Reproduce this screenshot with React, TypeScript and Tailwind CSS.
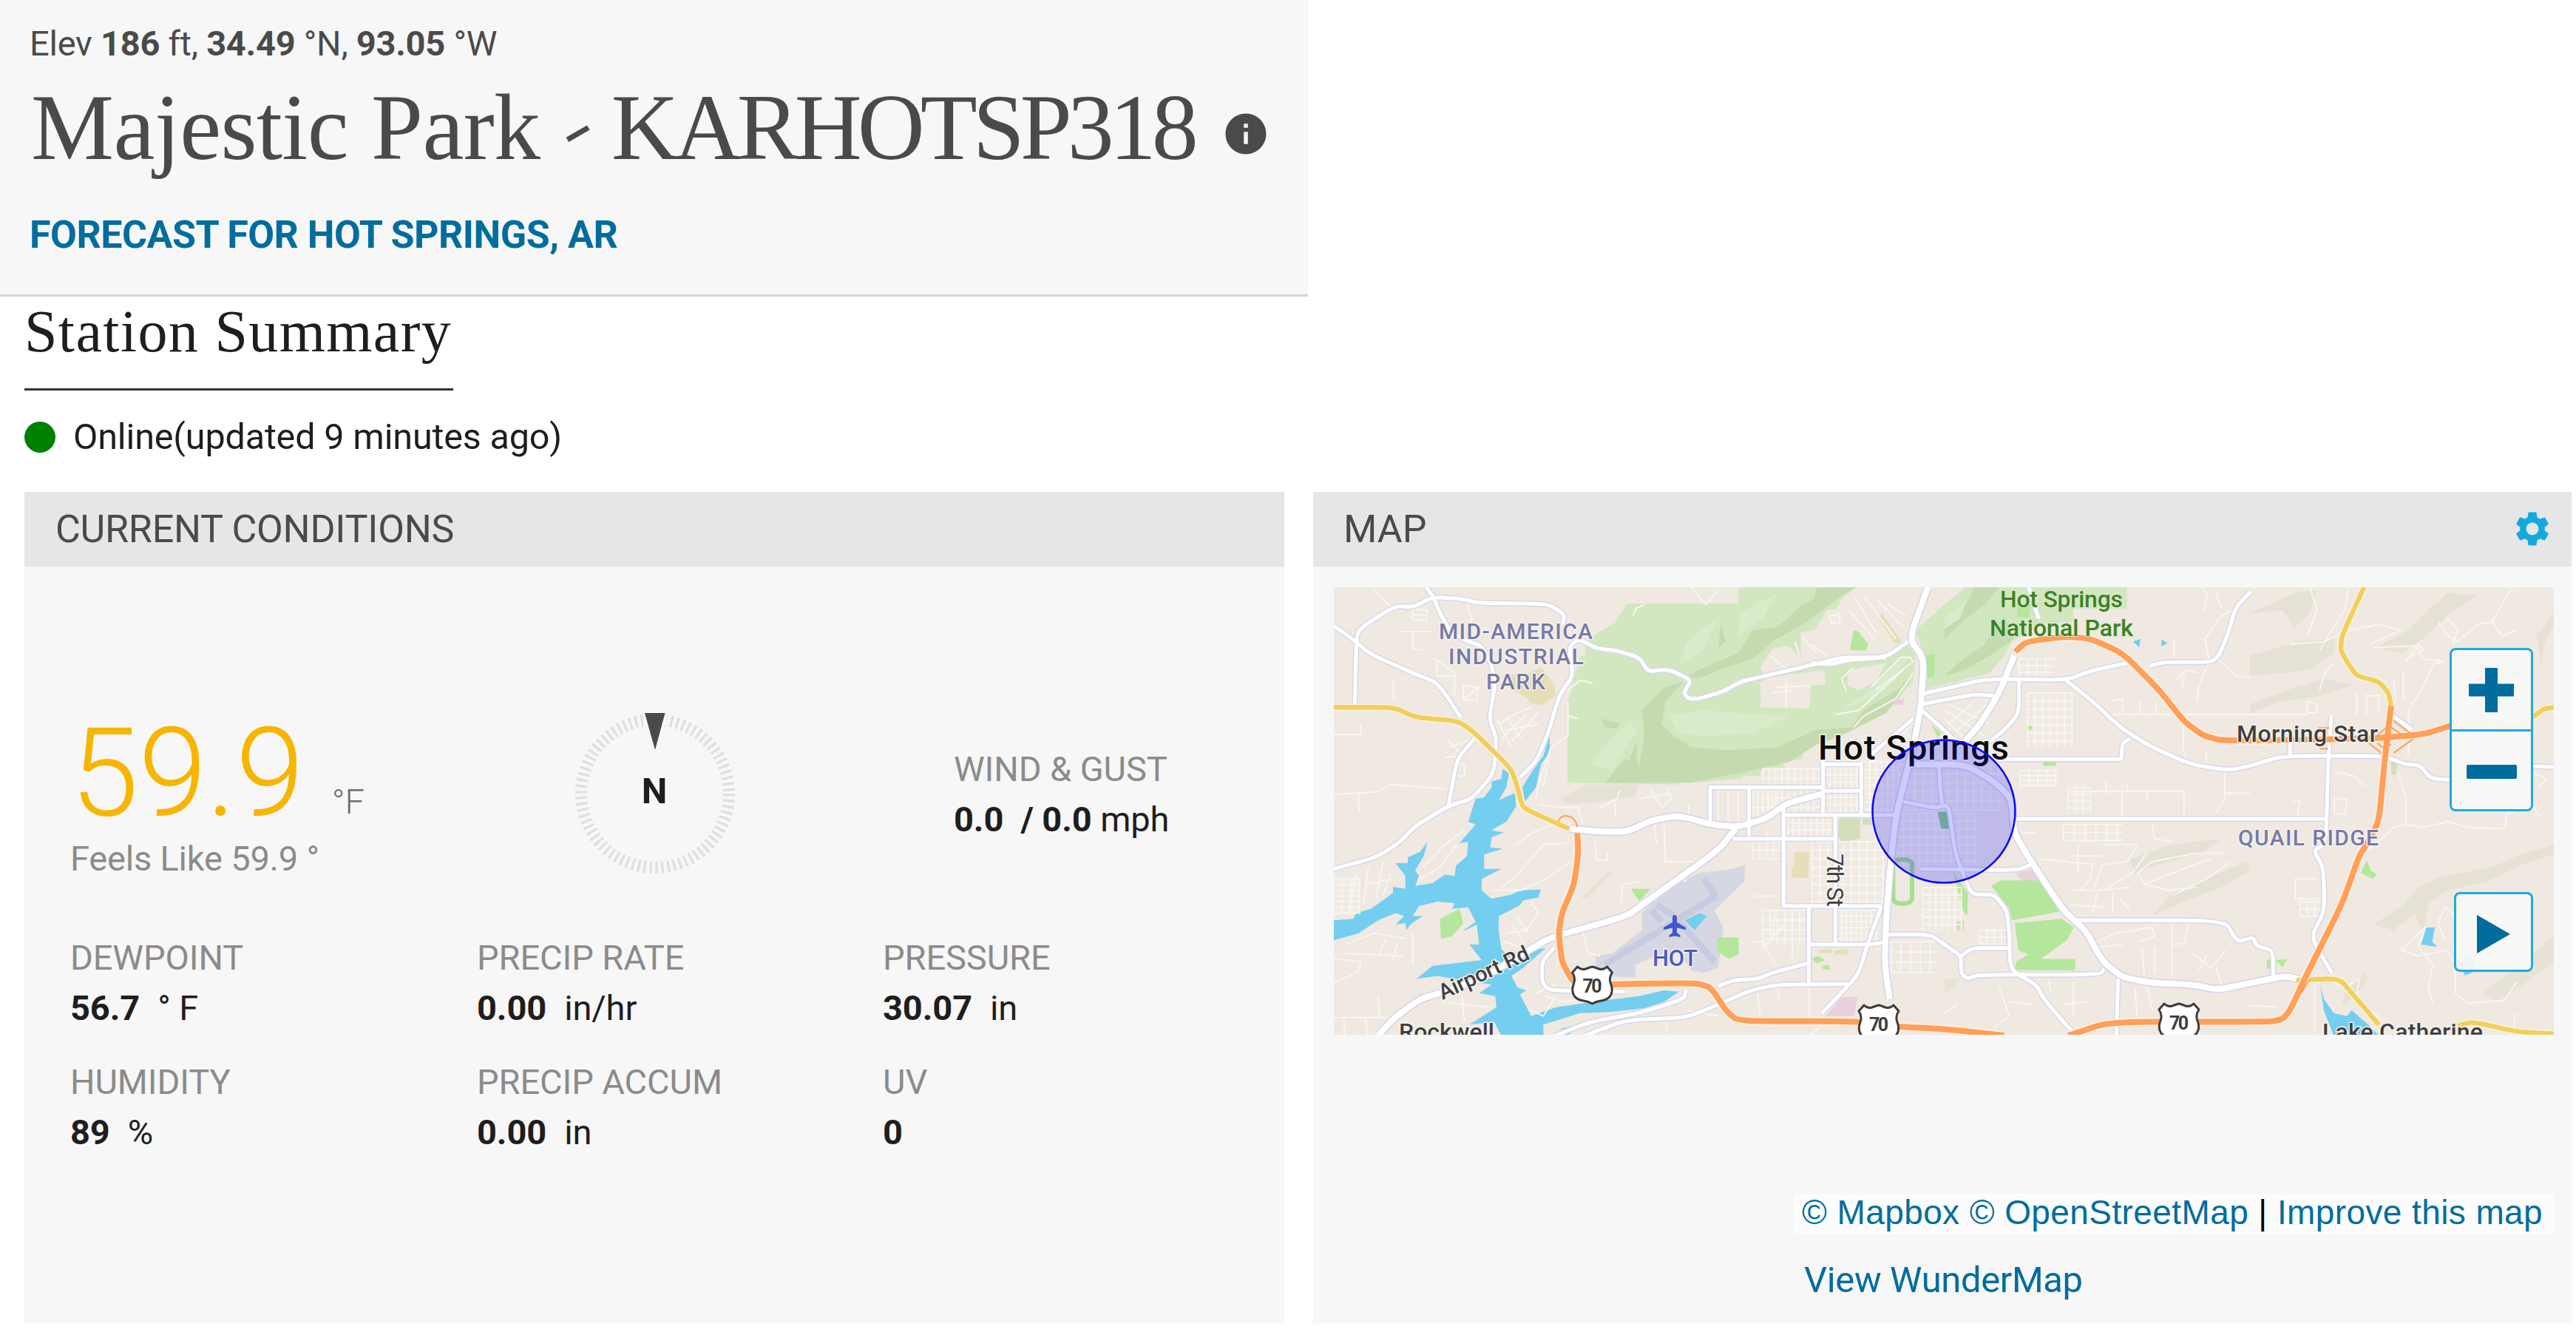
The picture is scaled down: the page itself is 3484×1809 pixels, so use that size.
import { MdInfo, MdSettings } from 'react-icons/md'

interface Metric {
  label: string
  value: string
  unit?: string
}

const METRICS: Metric[] = [
  { label: 'DEWPOINT', value: '56.7', unit: '° F' },
  { label: 'PRECIP RATE', value: '0.00', unit: 'in/hr' },
  { label: 'PRESSURE', value: '30.07', unit: 'in' },
  { label: 'HUMIDITY', value: '89', unit: '%' },
  { label: 'PRECIP ACCUM', value: '0.00', unit: 'in' },
  { label: 'UV', value: '0' },
]

// Map geometry lives in a 4950 x 1566 survey grid; MapCanvas scales it to the
// 1650 x 605 viewport and keeps the stroke widths in screen pixels.

const FOREST = [
  '948,684 948,400 965,350 1000,240 1020,240 1020,200 1060,165 1140,125 1190,57 1642,57 1642,0 2120,0 2060,40 2040,75 2000,80 1950,150 1895,157 1895,245 1840,205 1780,215 1730,280 1740,300 1880,285 1960,262 2060,245 2240,245 2320,190 2360,240 2350,330 2300,380 2240,440 2150,480 2080,510 1990,545 1960,550 1905,570 1900,602 1820,608 1830,630 1735,640 1730,660 1655,660 1650,670 1440,684 1430,655 1400,655 1400,690',
  '2360,150 2478,60 2560,0 3218,0 3218,75 3000,75 3000,120 2870,130 2750,190 2720,240 2660,300 2478,340 2380,360 2400,250',
]

const CLEARINGS = [
  '1730,335 1760,315 1990,290 1995,340 1935,345 1930,425 1732,420',
  '2085,290 2240,265 2200,330 2130,360 2085,345',
]

const RIDGES = [
  '2120,0 2060,30 2000,70 1900,130 1780,190 1700,250 1560,290 1480,320 1440,310 1480,290 1640,230 1700,150 1800,140 1900,60 1950,40 1960,0',
  '1239,620 1260,520 1250,430 1340,350 1420,330 1345,400 1330,480 1380,520 1450,560 1600,570 1800,560 1950,500 2100,490 2150,430 2300,350 2340,300 2300,380 2240,440 2080,510 1960,550 1850,610 1650,650 1440,684 1100,684 1180,600',
  '1570,130 1590,190 1560,210',
  '1080,460 1160,475 1150,495 1100,490',
  '1230,540 1200,600 1230,630',
  '2700,0 2640,60 2540,130 2478,180 2478,140 2560,70 2600,0',
  '2720,100 2760,180 2660,240 2560,290 2478,310 2540,260 2640,200',
]

const FOREST_LIGHTS = [
  '1480,150 1560,110 1500,220 1400,270 1430,200',
  '1360,450 1500,430 1700,445 1850,450 1700,510 1500,520 1400,510',
  '1650,90 1800,20 1740,110 1640,170',
  '1090,560 1200,470 1230,500 1130,640 1050,620',
  '2290,260 2340,240 2200,380 2060,430 2180,360',
  '2478,110 2570,40 2540,110 2478,145',
]

const HILLS = [
  '3717,90 3800,60 3900,20 3990,10 3960,90 3900,140 3850,80',
  '3717,240 3830,210 3920,190 4060,180 4060,230 3960,290 3850,300 3717,310',
  '3717,410 3900,350 4020,320 4140,340 4000,380 3840,400 3717,440',
  '4230,210 4360,150 4440,80 4520,20 4640,30 4530,90 4420,180 4330,230',
  '3320,1150 3400,1070 3520,1030 3700,960 3720,990 3600,1050 3420,1110',
  '3230,950 3400,900 3600,880 3520,930 3380,960 3250,1000',
  '4220,1180 4340,1110 4400,1050 4500,1010 4700,980 4800,940 4950,900 4950,935 4820,970 4680,1030 4520,1060 4420,1120 4300,1200',
  '4400,1060 4440,1120 4420,1210 4390,1150',
  '4100,1420 4180,1350 4200,1370 4130,1440 4090,1460',
  '4660,1420 4800,1330 4950,1220 4950,1310 4860,1370 4720,1450',
  '4880,170 4950,90 4950,130 4910,200 4900,270',
  '2478,1370 2540,1370 2490,1420 2478,1410',
  '920,740 1020,690 1240,690 1220,730 1080,750 960,760',
  '1000,1090 1120,990 1130,1000 1040,1080',
]

const WATER = [
  '0,1165 80,1160 90,1140 150,1125 240,1070 240,1048 290,1055 290,1010 250,965 300,965 300,945 350,925 380,890 365,940 330,990 345,1010 330,1045 400,1035 450,1005 490,1010 495,975 540,940 545,890 510,895 575,830 545,820 575,740 610,735 640,700 640,680 680,670 685,635 710,650 700,700 670,745 735,720 740,765 700,820 640,850 690,858 640,875 635,910 685,915 610,935 610,985 680,985 600,1020 600,1060 640,1090 720,1075 760,1060 840,1057 830,1085 770,1095 750,1115 670,1150 668,1200 680,1265 700,1285 860,1262 770,1330 720,1360 745,1400 780,1410 755,1425 780,1465 800,1500 900,1470 1050,1450 1239,1430 1340,1410 1400,1415 1340,1450 1260,1472 1130,1485 1000,1490 850,1530 850,1568 680,1568 650,1520 550,1530 660,1470 655,1430 590,1420 640,1390 520,1375 420,1360 335,1370 400,1325 540,1310 600,1305 550,1250 590,1250 580,1180 520,1205 575,1170 545,1120 480,1125 490,1105 420,1100 345,1115 320,1150 360,1150 310,1180 295,1200 290,1175 250,1180 285,1150 250,1140 180,1165 100,1210 0,1235',
  '875,520 878,575 840,620 820,700 775,750 765,700 800,650 850,590',
  '1424,1165 1484,1140 1514,1150 1464,1200',
  '4412,1250 4432,1190 4467,1190 4457,1240 4477,1258',
  '4565,1320 4580,1295 4610,1290 4632,1310 4615,1350 4590,1358',
  '4002,1390 4017,1440 4057,1490 4110,1500 4130,1480 4197,1530 4240,1568 4057,1568 4017,1480',
  '3243,190 3273,180 3268,210',
  '3358,183 3383,195 3358,207',
  '4785,300 4805,290 4815,305 4795,312',
  '920,1545 990,1530 950,1568',
]

const PARKS = [
  '435,1230 430,1160 510,1125 525,1175 480,1220',
  '2668,1045 2708,1025 2863,1025 2943,1135 2753,1165 2738,1120',
  '2763,1175 2953,1160 3003,1190 2973,1235 2918,1270 2868,1300 3008,1300 3008,1340 2763,1340 2768,1310 2818,1285 2778,1270',
  '1554,1225 1642,1225 1642,1285 1604,1300 1559,1275',
  '1205,1055 1285,1055 1239,1098',
  '1939,1300 1964,1290 1994,1305 1959,1315',
  '1979,1325 2009,1320 2012,1337 1985,1337',
  '2094,220 2109,150 2129,155 2169,200 2155,222',
  '2813,480 2833,480 2833,498 2813,498',
  '2878,612 2935,612 2925,625 2880,625',
  '2515,1000 2573,1070 2570,1150 2553,1130',
  '4167,1000 4192,955 4207,990 4232,1005 4217,1020',
  '3822,1305 3868,1300 3850,1330',
  '3785,1305 3800,1300 3800,1335 3787,1335',
  '2400,240 2440,230 2435,315 2410,318',
  '2425,480 2465,510 2450,525',
  '2772,60 2830,60 2820,105 2772,105',
]

const MUTED_PARKS = [
  '2050,808 2136,808 2136,878 2060,893 2045,870',
  '2145,808 2185,808 2180,832 2145,832',
  '4290,610 4318,605 4310,655 4290,655',
  '2526,1170 2556,1165 2556,1200 2526,1200',
]

const YARDS = [
  '770,380 800,405 840,412 900,380 895,340 840,280 790,300 680,310 730,360',
  '1869,927 1929,927 1924,1018 1857,1015 1857,980 1869,978',
  '2212,110 2224,90 2304,190 2279,198',
  '1970,1268 2020,1265 2020,1280 1970,1280',
  '2030,1272 2085,1265 2085,1285 2030,1285',
]

const PINK_LOTS = [
  '1995,1500 2060,1435 2125,1433 2110,1500',
  '2768,1000 2850,985 2860,1025 2790,1025',
  '2270,400 2315,388 2310,410 2275,412',
]

const AIRFIELD =
  '1062,1360 1062,1290 1130,1280 1250,1200 1250,1140 1300,1080 1480,1000 1620,985 1670,970 1664,1030 1600,1085 1545,1130 1580,1190 1560,1330 1500,1350 1450,1340 1400,1280 1300,1290 1225,1320 1225,1365'

// x, y, width, height, column step, row step
const STREET_GRIDS: number[][] = [
  [1740, 635, 240, 160, 26, 34],
  [1990, 630, 150, 165, 22, 26],
  [2150, 610, 130, 185, 24, 28],
  [1700, 710, 120, 90, 20, 60],
  [1840, 800, 190, 75, 24, 25],
  [1700, 890, 110, 60, 28, 30],
  [1940, 890, 290, 220, 32, 30],
  [2040, 1130, 170, 120, 20, 20],
  [1740, 1130, 180, 120, 30, 34],
  [2290, 620, 430, 160, 34, 32],
  [2280, 790, 330, 190, 32, 28],
  [2390, 1050, 160, 150, 26, 26],
  [2815, 370, 180, 190, 30, 28],
  [2785, 640, 150, 60, 36, 18],
  [2980, 700, 90, 90, 30, 24],
  [2960, 830, 240, 60, 44, 28],
  [2780, 250, 140, 60, 36, 24],
  [0, 1020, 110, 120, 34, 20],
  [2620, 1200, 110, 55, 30, 24],
  [2260, 1240, 190, 110, 40, 36],
  [3920, 1100, 90, 55, 30, 26],
]

const LANES = [
  'M320,75L380,80L375,118L320,112ZM320,95L375,98M160,10L235,70M540,60L560,110L545,160',
  'M270,155L400,155M320,155L320,215L360,220M410,250L490,300L490,380M415,250L420,310L500,310M525,345L585,350L580,395L525,395ZM525,395L585,350',
  'M240,330L243,400M0,515L110,515L108,480M0,725L180,715L230,690L455,705M100,720L102,785',
  'M670,480L740,440L800,420M690,500L830,480M680,530L780,445M720,540L830,440M700,450L760,530M660,460L720,560',
  'M460,530L520,590L450,595M470,560L560,530L640,560M510,620L530,620L530,660L490,660',
  'M950,400L950,520L880,560L850,700M880,560L830,690L820,740M950,360L1000,325L1050,335M950,450L995,460',
  'M830,760L920,770L1000,770M990,770L1010,830M1080,770L1150,740L1160,710M1140,750L1145,810M890,830L800,860L740,900',
  'M640,1060L760,1060L860,1020L960,960M680,1050L740,1010L850,900L950,895M1060,890L1065,955L1110,955L1110,930',
  'M90,1000L60,1140M140,980L120,1110M200,960L170,1090M230,1000L200,1080M130,1040L240,1020M360,980L450,900L530,850M350,1020L430,980L500,900',
  'M50,1250L160,1210L290,1230M40,1280L280,1290M0,1300L110,1310L100,1345L0,1385M210,1230L180,1290M320,1210L320,1320M260,1240L240,1300',
  'M0,1505L240,1505M130,1510L135,1568M180,1430L185,1505M40,1510L45,1568M440,1450L640,1470M520,1430L530,1520',
  'M700,1210L780,1200L830,1140L800,1100M720,1180L770,1240M740,1150L790,1210M690,1240L760,1260',
  'M1010,1200L1030,1280L1080,1290M1165,1110L1170,1040L1239,1030',
  'M800,1480L850,1500L900,1430M860,1430L930,1450L1040,1440M820,1420L900,1390',
  'M1450,0L1510,60L1560,10M1215,100L1225,75L1260,60M2110,30L2200,160M2090,80L2200,190M2150,30L2280,180M2200,40L2310,140M2250,60L2320,100M2010,100L2050,95L2055,125L2020,125Z',
  'M1870,190L1890,240M1770,240L1830,280M1900,175L1960,230M1940,200L2000,240M1790,350L1930,345M1835,330L1835,425M1780,370L1860,360',
  'M2035,445L2130,430L2220,360L2310,290M2110,490L2150,450L2280,390L2350,300M2080,365L2060,320L2110,280M2200,360L2350,260L2340,245L2300,245L2180,350',
  'M1239,740L1300,730L1370,720M1280,700L1330,770M1350,700L1370,740L1330,770M1300,820L1310,900M1340,830L1345,960M1440,760L1440,830',
  'M1560,700L1560,830M1600,700L1600,830M1640,700L1640,830M1760,850L1760,900M1340,960L1500,960M1390,1010L1430,1030',
  'M1710,1080L1790,1080M1740,1140L1740,1240L1790,1320M1790,1130L1780,1230M1830,1180L1740,1260M1860,1130L1860,1300M1690,1240L1740,1240',
  'M1430,1480L1560,1500M1720,1420L1730,1500M1800,1400L1810,1450M1930,1400L1930,1500M1350,1520L1350,1568M2000,1520L1930,1568',
  'M2280,540L2400,430M2300,500L2370,540M2260,500L2330,560M2478,430L2640,520M2500,410L2660,480M2490,480L2600,400M2530,500L2650,410M2478,460L2560,530',
  'M3150,400L3200,390L3200,440M3160,445L3950,445M3270,400L3272,445M3335,400L3335,445M3410,180L3410,245M3530,80L3545,20L3520,0M3580,20L3600,70M3550,250L3535,180L3600,100L3680,70',
  'M3420,320L3460,290L3510,300M3550,260L3510,350L3500,400M3440,360L3450,310M3450,450L3445,560L3460,600M3585,250L3660,310L3720,315',
  'M2990,715L3450,715L3450,800M3198,720L3198,800M3300,720L3300,750M3130,680L3135,720M3220,690L3220,715M3540,570L3540,620M3615,640L3615,740L3580,790M3620,720L3717,720',
  'M2790,860L2850,860M2860,950L3080,970L3070,1020L3030,1060M3020,900L3020,1000M2980,940L3120,940M3120,900L3260,900L3220,960L3120,970M3320,830L3330,880L3400,890',
  'M2990,1060L3080,1060L3120,970M2990,1110L3120,1120M3080,1140L3100,1060L3230,1050M3160,1070L3160,1140M3190,1090L3230,1130M3140,1050L3240,1000L3300,930',
  'M3260,1000L3320,960L3500,930L3620,930M3290,1040L3400,1000L3560,950M3260,1000L3290,1040L3390,1060L3500,1050M3400,1080L3540,1020L3640,960',
  'M3100,1240L3170,1210L3320,1190L3330,1220L3270,1240M3100,1260L3200,1250M3280,1260L3290,1390M3330,1260L3330,1350M3400,1180L3400,1360M3400,1250L3450,1245L3470,1170M3480,1280L3560,1330L3620,1270M3540,1290L3510,1340M3580,1330L3600,1390',
  'M2900,1370L2910,1420M2960,1460L3060,1450M3000,1380L3000,1500M3250,1400L3260,1500M3300,1400L3320,1480M2700,1400L2740,1500L2680,1540M2740,1450L2840,1460M2478,1490L2530,1460',
  'M4000,220L4050,150L4100,80L4120,0M3960,0L3990,80L3950,170M3880,200L4020,190L4120,150L4240,130L4330,150L4200,200M4050,270L4020,300L4000,360',
  'M4350,250L4420,220L4400,200L4350,260M4220,210L4390,205L4420,250L4500,260L4460,270L4420,350L4360,430L4360,590M4480,120L4520,170L4560,190L4640,130L4700,120L4780,0M4500,130L4520,110L4560,150L4540,200M4700,120L4740,170L4800,150',
  'M4150,370L4150,450M4180,380L4240,380L4240,440M4190,380L4190,450M3950,400L3990,410L3990,440L3950,440ZM4300,330L4310,400M4340,300L4340,400',
  'M4060,645L4140,660L4180,695M4060,740L4110,740L4105,795L4060,790ZM3890,750L3920,745L3910,800M4320,650L4350,740L4350,830L4300,840L4200,920M4350,830L4420,840L4520,820L4600,840L4750,845L4760,790L4870,770L4890,800',
  'M3900,1020L3990,1020M3900,1020L3900,1090L4000,1090M4330,1270L4430,1190L4400,1260L4460,1320L4440,1400L4460,1460M4480,1170L4510,1120L4550,1150M4480,1170L4510,1240M4330,1270L4400,1290L4520,1270L4550,1320L4550,1420L4600,1455L4750,1445L4800,1380',
  'M3980,1390L3980,1568M4020,1370L4100,1400L4160,1370L4150,1440L4250,1510M3717,1465L3830,1468M4790,1490L4790,1540M4870,650L4920,670L4890,700',
]

const MINOR_ROADS = [
  '-10,130 75,180 150,235 270,280 320,300 410,330 450,370 515,455',
  '375,0 405,35 430,90 470,150 530,185 600,205 640,270 655,340 630,460 660,530 650,650 560,740 465,765 330,835 270,890 200,930 150,950 0,985',
  '85,410 92,160 130,130 250,65 320,70 400,35 520,40 580,55 870,58 935,95 930,130',
  '465,765 500,600 570,530',
  '755,665 820,610 870,510 900,420 920,370 970,310 955,210 990,180 1070,215 1140,220 1239,245 1275,295 1360,287 1450,325 1420,370 1440,390 1480,390 1580,365 1650,330 1750,310 1950,270 2060,245 2240,245 2330,190',
  '895,1260 845,1310 845,1380 870,1408 960,1412 1180,1415',
  '1940,265 2020,270 2080,255 2240,245',
  '2220,1120 2165,1250 2130,1350 2080,1400 1980,1490',
  '1560,1395 1620,1375 1720,1370 1790,1345 1927,1315',
  '1020,1568 1180,1515 1430,1505 1560,1460 1690,1410 1800,1390 2085,1388',
  '900,1568 1040,1520 1239,1490 1420,1440 1430,1410',
  '2250,1215 2420,1215 2478,1250 2545,1290 2545,1350 2570,1370 2620,1355 3110,1355 3125,1335',
  '2545,1290 2590,1262 2735,1262',
  '2380,985 2770,990 2830,970',
  '2310,750 2440,772 2495,760 2520,930 2580,1060 2600,1075 2680,1075 2730,1130 2740,1200 2745,1340 2850,1390 2880,1440 2980,1540 3020,1568',
  '2380,375 2478,355 2650,320 2970,325 3080,290 3220,265',
  '2970,325 3080,400 3190,490 3320,560 3480,620 3630,640 3717,625 3850,590 4240,590 4290,600 4350,620 4405,622 4450,668 4530,675 4700,640 4870,625 4956,630',
  '3310,275 3370,262 3560,262 3590,240 3625,170 3660,70 3720,15',
  '2380,410 2500,390 2600,375 2680,380',
  '2385,430 2478,500 2510,530',
  '2780,320 2780,440 2720,500 2660,540',
  '3195,602 3200,545 3230,530',
  '2820,0 2860,110',
  '3015,1165 3615,1165 3665,1240 3730,1225 3745,1255 3810,1270 3812,1360',
  '4047,450 4035,600 4025,900 3975,920 4015,980 4020,1130 3965,1225 4050,1350',
  '2160,600 2350,460',
]

const GRID_ROADS =
  'M1527,830V700H1985M1685,700V870M1985,610V790M2140,610V800M1985,712H2140M1985,620H2140M1825,770V1115H2220M2035,800V1250M1927,1120V1385M1825,797H2280M1620,880H2035M1927,1250H2170L2230,1243M2700,601H3195M2770,810H4025M3182,1370L3175,1568M3880,530V590M2455,620L2460,700 2470,770'

const MAIN_ROADS = [
  '960,845 1080,855 1190,855 1290,815 1390,800 1450,810 1530,830 1640,838 1750,810 1840,755 1985,722',
  '180,1568 240,1510 350,1440 450,1415 600,1370 780,1275 880,1225 1190,1150 1260,1105 1560,920 1630,845',
  '2410,0 2335,180 2395,250 2380,430 2350,560 2280,800 2255,1000 2240,1180 2235,1320 2255,1440',
  '2760,240 2700,370 2620,480 2560,540',
  '2340,620 2560,620 2680,680 2750,740 2760,860 2830,960 2960,1130 3050,1200 3120,1310 3200,1365 3330,1385 3480,1390 3590,1408 3717,1385 3860,1360 3920,1372',
  '4290,450 4370,500',
]

const YELLOW_ROADS = [
  '0,420 245,420 330,455 500,468 560,500 720,635 745,700 765,770 850,805 955,845',
  '4180,0 4090,170 4085,220 4110,260 4150,310 4240,330 4280,370 4290,415',
  '4530,485 4600,475 4700,480 4800,490 4870,450 4910,425 4950,420',
  '3905,1375 4080,1368 4140,1430 4240,1530',
  '4560,1535 4620,1520 4800,1555 4950,1562',
]

const HIGHWAYS = [
  '988,860 992,930 975,1040 925,1140 912,1210 925,1310 970,1380 1030,1392 1239,1387 1470,1385 1530,1400 1590,1480 1640,1518 2120,1518 2240,1535 2478,1545 2720,1568',
  '2980,1568 3150,1520 3800,1520 3850,1510 3880,1480 3950,1350 4090,1110 4160,940 4190,900 4240,820 4260,640 4275,520 4290,415',
  '2765,225 2810,190 2970,172 3070,180 3200,230 3350,360 3450,470 3530,520 3610,537 4200,530 4420,515 4530,485',
]

/** Rounds a list of survey points into a path with a soft bend at each one. */
function smooth(points: string) {
  const pts = points.split(' ').map((p) => p.split(',').map(Number))
  let d = `M${pts[0][0]},${pts[0][1]}`
  for (let i = 1; i < pts.length - 1; i++) {
    const [px, py] = pts[i - 1]
    const [x, y] = pts[i]
    const [nx, ny] = pts[i + 1]
    d += `L${x + (px - x) * 0.3},${y + (py - y) * 0.3}Q${x},${y} ${x + (nx - x) * 0.3},${y + (ny - y) * 0.3}`
  }
  const last = pts[pts.length - 1]
  return `${d}L${last[0]},${last[1]}`
}

function gridPath([x, y, w, h, dx, dy]: number[]) {
  let d = ''
  for (let gx = x; gx <= x + w; gx += dx) d += `M${gx},${y}V${y + h}`
  for (let gy = y; gy <= y + h; gy += dy) d += `M${x},${gy}H${x + w}`
  return d
}

function Areas({ shapes, fill, opacity = 1 }: { shapes: string[]; fill: string; opacity?: number }) {
  return (
    <g fill={fill} opacity={opacity}>
      {shapes.map((points) => (
        <polygon key={points} points={points} />
      ))}
    </g>
  )
}

function Roads({ paths, stroke, width }: { paths: string[]; stroke: string; width: number }) {
  return (
    <g fill="none" stroke={stroke} strokeWidth={width} strokeLinejoin="round">
      {paths.map((d) => (
        <path key={d} d={d} vectorEffect="non-scaling-stroke" />
      ))}
    </g>
  )
}

function Shield({ x, y }: { x: number; y: number }) {
  return (
    <g transform={`translate(${x} ${y})`}>
      <path
        d="M-20,-25Q-15,-20 -9,-22Q-4,-24 0,-25Q4,-24 9,-22Q15,-20 20,-25L27,-17Q22,-10 25,-2Q29,8 24,15Q20,20 12,21Q5,22 0,25Q-5,22 -12,21Q-20,20 -24,15Q-29,8 -25,-2Q-22,-10 -27,-17Z"
        fill="#fff"
        stroke="#3c3c3c"
        strokeWidth="3"
        strokeLinejoin="round"
      />
      <text x="-13" y="10" textLength="26" fontSize="25" fontWeight="700" fill="#3c3c3c">
        70
      </text>
    </g>
  )
}

function MapCanvas() {
  const minor = MINOR_ROADS.map(smooth).concat(GRID_ROADS)
  const main = MAIN_ROADS.map(smooth)
  const yellow = YELLOW_ROADS.map(smooth)
  const highways = HIGHWAYS.map(smooth)

  return (
    <svg viewBox="0 0 1650 605" className="block h-[605px] w-[1650px] bg-[#efe9e1] font-['Roboto',sans-serif]">
      <g transform="scale(0.33333 0.38647)">
        <Areas shapes={HILLS} fill="#e4dfd2" opacity={0.75} />
        <Areas shapes={FOREST} fill="#d2e7c0" />
        <Areas shapes={RIDGES} fill="#c6daaf" />
        <Areas shapes={FOREST_LIGHTS} fill="#daebcb" />
        <Areas shapes={CLEARINGS} fill="#efe9e1" />
        <Areas shapes={[AIRFIELD]} fill="#d5d8e2" />
        <Areas shapes={MUTED_PARKS} fill="#d3dfba" />
        <Areas shapes={YARDS} fill="#e5deb6" />
        <Areas shapes={PINK_LOTS} fill="#e8d1da" />
        <Areas shapes={PARKS} fill="#b4e69c" />
        <Areas shapes={WATER} fill="#74cef0" />
        <Roads
          paths={['M1100,1320L1550,1080', 'M1400,1170L1545,1310', 'M1290,1130L1330,1170M1500,1020L1550,1080M1310,1110L1380,1150']}
          stroke="#c8cae0"
          width={9}
        />
        <Roads paths={STREET_GRIDS.map(gridPath)} stroke="#f9f6f2" width={1.8} />
        <Roads paths={LANES} stroke="#f9f6f2" width={2} />
        <Areas shapes={['2450,785 2495,785 2500,845 2465,845']} fill="#8fd08a" />
        <Roads paths={['M2269,970Q2269,952 2307,952Q2346,952 2346,970V1085Q2346,1107 2307,1107Q2269,1107 2269,1085Z']} stroke="#a6df8e" width={6} />
        <Roads paths={minor} stroke="#d6d8ea" width={8} />
        <Roads paths={main} stroke="#d6d8ea" width={11.5} />
        <Roads paths={minor} stroke="#ffffff" width={5} />
        <Roads paths={main} stroke="#ffffff" width={8} />
        <Roads paths={yellow} stroke="#fbf6e6" width={9} />
        <Roads paths={yellow} stroke="#f2cf5b" width={6.5} />
        <Roads paths={highways} stroke="#fdf3ea" width={11} />
        <Roads
          paths={[
            'M910,820Q920,798 945,800Q980,803 988,840',
            'M4200,545L4250,580M4300,465L4375,515M4300,580L4380,530M4220,530L4270,490M4290,490L4340,520M4235,545L4255,560L4290,550',
            'M3995,492L4040,492M4000,565L4035,565M3925,1420L3960,1370',
          ]}
          stroke="#ff9f58"
          width={2}
        />
        <Roads paths={highways} stroke="#ff9f58" width={8} />
      </g>

      <g fontSize="30" fontWeight="500" fill="#757aa6" stroke="#f6f3f0" strokeWidth="3" paintOrder="stroke" strokeLinejoin="round">
        <text x="142" y="69.5" textLength="208">MID-AMERICA</text>
        <text x="155" y="104" textLength="183">INDUSTRIAL</text>
        <text x="206" y="138" textLength="80">PARK</text>
        <text x="1223" y="349" textLength="190">QUAIL RIDGE</text>
        <text x="431" y="512" textLength="61" fontSize="31" fill="#4a5ac0">HOT</text>
      </g>
      <g fontSize="32" fontWeight="400" fill="#3f3f3f" stroke="#f6f3f0" strokeWidth="3" paintOrder="stroke" strokeLinejoin="round">
        <text transform="translate(147 558) rotate(-25)" textLength="132" fontWeight="500" fontSize="29">Airport Rd</text>
        <text x="88" y="612" textLength="129" fontWeight="500">Rockwell</text>
        <text transform="translate(667 360) rotate(90)" textLength="72" fontSize="31">7th St</text>
        <text x="1221" y="209" textLength="191" fontWeight="500">Morning Star</text>
        <text x="1337" y="612" textLength="217" fontWeight="500">Lake Catherine</text>
      </g>
      <g fontSize="32" fontWeight="500" fill="#3c8226" stroke="#dcebd0" strokeWidth="2" paintOrder="stroke">
        <text x="901" y="27" textLength="166">Hot Springs</text>
        <text x="887" y="66" textLength="194">National Park</text>
      </g>
      <text x="655" y="233" textLength="258" fontSize="47" fontWeight="500" fill="#0c0c0c" stroke="#f6f3f0" strokeWidth="3" paintOrder="stroke">
        Hot Springs
      </text>
      <path
        d="M461 443Q464 443 464 448V453L476 460V463L464 460.5V467L468.500 470.500V473L461 471.500L453.500 473V470.500L458 467V460.500L446 463V460L458 453V448Q458 443 461 443Z"
        fill="#4257c8"
      />
      <Shield x={349.5} y={538} />
      <Shield x={737} y={590} />
      <Shield x={1143} y={588} />
      <circle cx="825" cy="303" r="96.5" fill="#0000ff" fillOpacity="0.2" stroke="#0a0af0" strokeWidth="2.5" />
    </svg>
  )
}

function MapControls() {
  return (
    <>
      <div className="absolute top-[82px] left-[1509px] h-[221px] w-[113px] divide-y-3 divide-[#1fabdd] rounded-lg border-3 border-[#1fabdd] bg-[#f8f8f7]/93">
        <button className="flex h-[110px] w-full items-center justify-center" aria-label="Zoom in">
          <svg viewBox="0 0 61 60" className="h-[60px] w-[61px]">
            <path d="M22 0H39V21.5H61V38.5H39V60H22V38.5H0V21.5H22Z" fill="#006d9e" />
          </svg>
        </button>
        <button className="flex h-[105px] w-full items-center justify-center pt-[3px]" aria-label="Zoom out">
          <span className="h-[19px] w-[68px] rounded-[2px] bg-[#006d9e]" />
        </button>
      </div>
      <button
        className="absolute top-[412px] left-[1515px] flex h-[108px] w-[107px] items-center justify-center rounded-lg border-3 border-[#1fabdd] bg-[#f8f8f7]/93 pt-[5px]"
        aria-label="Play"
      >
        <svg viewBox="0 0 45 52" className="h-[52px] w-[45px]">
          <path d="M0 0L45 26L0 52Z" fill="#006d9e" />
        </svg>
      </button>
    </>
  )
}

function Compass() {
  return (
    <svg viewBox="0 0 216 218" className="h-[218px] w-[216px]">
      <circle cx="108" cy="109" r="100" fill="none" stroke="#dfdfdf" strokeWidth="16" strokeDasharray="3.4 4.655" />
      <path d="M92 0H124V17H92Z" fill="#f7f7f7" />
      <path d="M94 0H121.5L108 50Z" fill="#4a4a4a" />
      <text x="107" y="122" textAnchor="middle" fontSize="49" fontWeight="700" fill="#1e1e1e">
        N
      </text>
    </svg>
  )
}

function StationHeader() {
  return (
    <header className="h-[401px] w-[1769px] border-b-3 border-[#d6d6d6] bg-[#f7f7f7] pt-[31px] pl-10 text-[#4a4a4a]">
      <p className="text-[47px] leading-[56px] tracking-[-0.25px]">
        Elev <b>186</b> ft, <b>34.49</b> °N, <b>93.05</b> °W
      </p>
      <div className="mt-[15px] flex items-center">
        <h1 className="w-[1612px] pt-[2px] pl-[2px] font-['Liberation_Serif',serif] text-[126px] leading-[138px] tracking-[-0.6px] whitespace-nowrap">
          Majestic Park <span className="-mr-[2px] -ml-[5px] inline-block -rotate-30 scale-y-75">-</span>{' '}
          <span className="tracking-[-6px]">KARHOTSP318</span>
        </h1>
        <MdInfo className="mt-[18px] size-[66px] shrink-0" />
      </div>
      <a className="mt-[46px] block text-[52px] leading-[60px] font-bold tracking-[-0.5px] text-[#006d9e]">
        FORECAST FOR HOT SPRINGS, AR
      </a>
    </header>
  )
}

function CurrentConditions() {
  return (
    <section className="h-[1124px] w-[1704px] bg-[#f7f7f7]">
      <h3 className="flex h-[101px] items-center bg-[#e6e6e6] pl-[42px] text-[52px] tracking-[-0.25px] text-[#4a4a4a]">
        CURRENT CONDITIONS
      </h3>
      <div className="pt-[198px] pl-[62px] text-[47px] tracking-[-0.1px]">
        <div className="flex h-[297px]">
          <div className="w-[683px]">
            <div className="-mt-[2px] flex items-baseline gap-[38px]">
              <span className="text-[167px] leading-[167px] font-light tracking-[-0.5px] text-[#f7b500]">59.9</span>
              <span className="-translate-y-[2px] font-light text-[#6e6e6e]">°F</span>
            </div>
            <p className="mt-1 leading-[56px] tracking-[-0.2px] text-[#8b8b8b]">Feels Like 59.9 °</p>
          </div>
          <Compass />
          <div className="mt-[42px] ml-[296px] leading-[68px]">
            <p className="text-[#8b8b8b]">WIND &amp; GUST</p>
            <p className="text-[#1e1e1e]">
              <b>0.0 &nbsp;/ 0.0</b> mph
            </p>
          </div>
        </div>
        <div className="grid grid-cols-[550px_549px_400px] gap-y-8 leading-[68px]">
          {METRICS.map(({ label, value, unit }) => (
            <div key={label}>
              <p className="text-[#8b8b8b]">{label}</p>
              <p className="text-[#1e1e1e]">
                <b>{value}</b>
                {unit && <span className="ml-[24px]">{unit}</span>}
              </p>
            </div>
          ))}
        </div>
      </div>
    </section>
  )
}

function MapPanel() {
  return (
    <section className="flex h-[1124px] w-[1702px] flex-col bg-[#f7f7f7]">
      <div className="flex h-[101px] items-center justify-between bg-[#e6e6e6] pr-[25px] pl-[41px]">
        <h3 className="text-[52px] text-[#4a4a4a]">MAP</h3>
        <MdSettings className="mb-[2px] size-[56px] text-[#14a9dd]" />
      </div>
      <div className="relative mt-7 ml-7 h-[605px] w-[1650px] overflow-hidden">
        <MapCanvas />
        <MapControls />
      </div>
      <div className="mt-[215px] mr-[24px] w-[1028px] self-end text-[#006d9e]">
        <p className="h-[54px] bg-[#fcfcfc] pl-[11px] font-['Liberation_Sans',sans-serif] text-[46px] leading-[50px] tracking-[0.4px] whitespace-nowrap">
          <a>© Mapbox</a> <a>© OpenStreetMap</a> <span className="text-black">|</span> <a>Improve this map</a>
        </p>
        <a className="mt-[33px] ml-[14px] block text-[49px] leading-[60px] tracking-[-0.4px]">View WunderMap</a>
      </div>
    </section>
  )
}

export default function App() {
  return (
    <div className="h-[1809px] w-[3484px] overflow-hidden bg-white font-['Roboto',sans-serif]">
      <StationHeader />
      <main className="pt-[2px] pl-[33px]">
        <h2 className="w-[580px] border-b-3 border-[#333] pb-8 font-['Liberation_Serif',serif] text-[80px] leading-[90px] tracking-[1.35px] whitespace-nowrap text-[#1e1e1e]">
          Station Summary
        </h2>
        <p className="mt-[35px] flex items-center gap-[24px] text-[48.5px] leading-[56px] tracking-[-0.15px] text-[#1e1e1e]">
          <span className="size-[42px] rounded-full bg-[#008000]" />
          Online(updated 9 minutes ago)
        </p>
        <div className="mt-[46px] flex gap-[39px]">
          <CurrentConditions />
          <MapPanel />
        </div>
      </main>
    </div>
  )
}
